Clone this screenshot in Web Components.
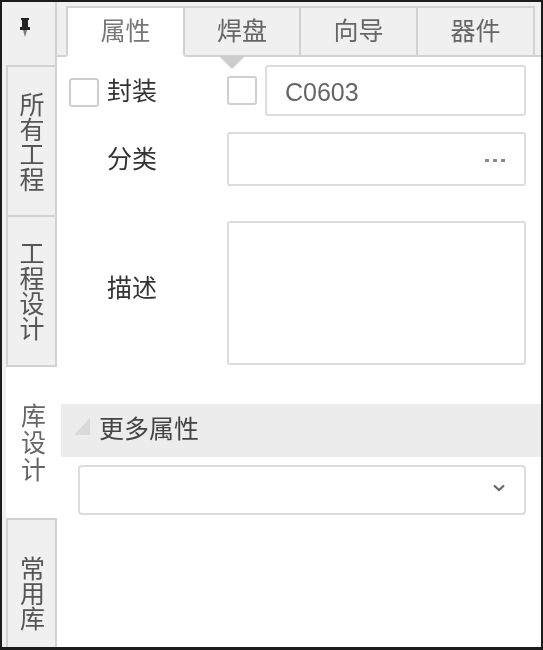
<!DOCTYPE html>
<html lang="zh"><head><meta charset="utf-8"><title>属性</title>
<style>
html,body{margin:0;padding:0;background:#fff}
body{font-family:"Noto Sans CJK SC","Liberation Sans",sans-serif}
</style></head><body>
<app-frame>
  <side-rail slot="rail">
    <pin-tile></pin-tile>
    <side-tab h="150" pt="1" lh="25">所有工程</side-tab>
    <side-tab h="152" lh="25" closed>工程设计</side-tab>
    <side-tab h="151" lh="27" pl="3" active>库设计</side-tab>
    <side-tab h="129" pt="19" pl="1" lh="25">常用库</side-tab>
  </side-rail>
  <main-panel slot="main">
    <tab-strip>
      <top-tab w="119" active>属性</top-tab>
      <top-tab w="116" marker>焊盘</top-tab>
      <top-tab w="117">向导</top-tab>
      <top-tab w="117">器件</top-tab>
    </tab-strip>
    <prop-form></prop-form>
  </main-panel>
</app-frame>
<script>
function def(name, css, html, setup){
  customElements.define(name, class extends HTMLElement{
    constructor(){super();const s=this.attachShadow({mode:'open'});s.innerHTML='<style>'+css+'</style>'+html;}
    connectedCallback(){ if(setup) setup(this); }
  });
}
const TEXT='filter:blur(.45px);';
def('app-frame',`:host{display:flex;box-sizing:border-box;width:543px;height:650px;border:2px solid #1c1c1c;border-bottom-width:3px;background:#fff;overflow:hidden}`,
 `<slot name="rail"></slot><slot name="main"></slot>`);
def('side-rail',`:host{display:flex;flex-direction:column;width:55px;flex:none;background:#f0f0f0}`,`<slot></slot>`);
def('pin-tile',`:host{display:flex;box-sizing:border-box;height:63px;justify-content:center;padding:15px 8px 0 0;border-right:2px solid #d2d2d2;}`,
 `<svg width="10" height="22" viewBox="0 0 10 22"><path d="M1 1h8v2H8v7h2v3H0v-3h2V3H1z" fill="#222"/><path d="M3 13h4L5 20z" fill="#777"/></svg>`);
def('side-tab',`:host{display:flex;box-sizing:border-box;margin-left:4px;justify-content:center;align-items:center;border:2px solid #d2d2d2;border-bottom-width:0;background:#f0f0f0;color:#555;font-size:25px;writing-mode:vertical-rl}
 :host([closed]){border-bottom-width:2px}
 :host([active]){background:#fff;border-color:#fff;color:#666}
 span{${TEXT}}`,`<span><slot></slot></span>`,el=>{
  el.style.height=el.getAttribute('h')+'px';
  el.style.lineHeight='1';
  el.style.letterSpacing=(el.getAttribute('lh')-25)+'px';
  if(el.hasAttribute('pt')) el.style.paddingTop=el.getAttribute('pt')+'px';
  if(el.hasAttribute('pl')) el.style.paddingLeft=el.getAttribute('pl')+'px';
 });
def('main-panel',`:host{display:flex;flex-direction:column;flex:1;min-width:0}`,`<slot></slot>`);
def('tab-strip',`:host{display:flex;box-sizing:border-box;height:55px;padding:4px 0 0 9px;background:#f0f0f0;border-bottom:2px solid #d2d2d2}`,`<slot></slot>`);
def('top-tab',`:host{display:flex;position:relative;box-sizing:border-box;height:50px;justify-content:center;align-items:center;padding-bottom:5px;border:2px solid #d2d2d2;border-left-width:0;border-bottom-width:0;color:#666;font-size:25px;line-height:1}
 :host([active]){background:#fff;height:51px;padding-bottom:4px;border-left-width:2px;border-bottom:2px solid #fff;color:#777;z-index:1}
 span{${TEXT}}
 i{display:none;position:absolute;left:34px;top:48px;width:0;height:0;border:13px solid transparent;border-bottom-width:0;border-top-color:#ccc}
 :host([marker]) i{display:block}`,`<span><slot></slot></span><i></i>`,el=>{el.style.width=el.getAttribute('w')+'px'});
def('check-box',`:host{display:block;box-sizing:border-box;width:30px;height:29px;border:2px solid #cfcfcf;border-radius:3px;background:#fff;flex:none}`,``);
def('text-box',`:host{display:flex;box-sizing:border-box;align-items:center;border:2px solid #dcdcdc;border-radius:3px;background:#fff;color:#666;font-family:"Liberation Sans",sans-serif;font-size:25px}`,`<slot></slot>`);
def('prop-form',`:host{display:block;flex:1;position:relative}
 .lab{font-size:25px;line-height:1;color:#333;${TEXT}}
 .r1{display:flex;align-items:flex-start;height:51px;padding:8px 0 0 0}
 .r1 .c1{margin:13px 0 0 12px}
 .r1 .lab{margin:12px 0 0 8px;width:112px}
 .r1 .c2{margin:11px 0 0 8px}
 .r1 text-box{margin-left:8px;width:261px;height:51px;padding:3px 0 0 18px}
 .r1 span{${TEXT}}
 .r2{display:flex;align-items:center;margin-top:16px;height:54px;padding-left:50px}
 .r2 .lab,.r3 .lab{width:120px}
 .r2 .lab{margin-top:-4px}
 .r3 .lab{margin-top:-14px}
 .r2 text-box{width:299px;height:54px;justify-content:flex-end;padding:0 19px 0 0}
 .dots{display:flex;gap:4px;margin-top:2px}
 .dots b{width:4px;height:3px;background:#8a8a8a}
 .r3{display:flex;align-items:center;margin-top:35px;padding-left:50px}
 .r3 text-box{width:299px;height:144px}
 .sec{display:flex;align-items:center;box-sizing:border-box;margin:39px 0 0 4px;height:53px;background:#ececec;padding-left:13px}
 .sec svg{margin:0 9px 8px 0}
 .sec .lab{color:#444;margin-top:-7px}
 .sel{margin:8px 0 0 21px;width:448px;height:50px;justify-content:flex-end;padding:0 19px 4px 0;border-radius:4px}
`,`<div class="r1"><check-box class="c1"></check-box><div class="lab">封装</div><check-box class="c2"></check-box><text-box><span>C0603</span></text-box></div>
<div class="r2"><div class="lab">分类</div><text-box><div class="dots"><b></b><b></b><b></b></div></text-box></div>
<div class="r3"><div class="lab">描述</div><text-box></text-box></div>
<div class="sec"><svg width="16" height="17" viewBox="0 0 16 17"><path d="M16 0v17H0z" fill="#d9d9d9"/></svg><div class="lab">更多属性</div></div>
<text-box class="sel"><svg width="12" height="8" viewBox="0 0 12 8"><path d="M1 1.5 6 6l5-4.5" fill="none" stroke="#666" stroke-width="2.2"/></svg></text-box>`);
</script>
</body></html>
